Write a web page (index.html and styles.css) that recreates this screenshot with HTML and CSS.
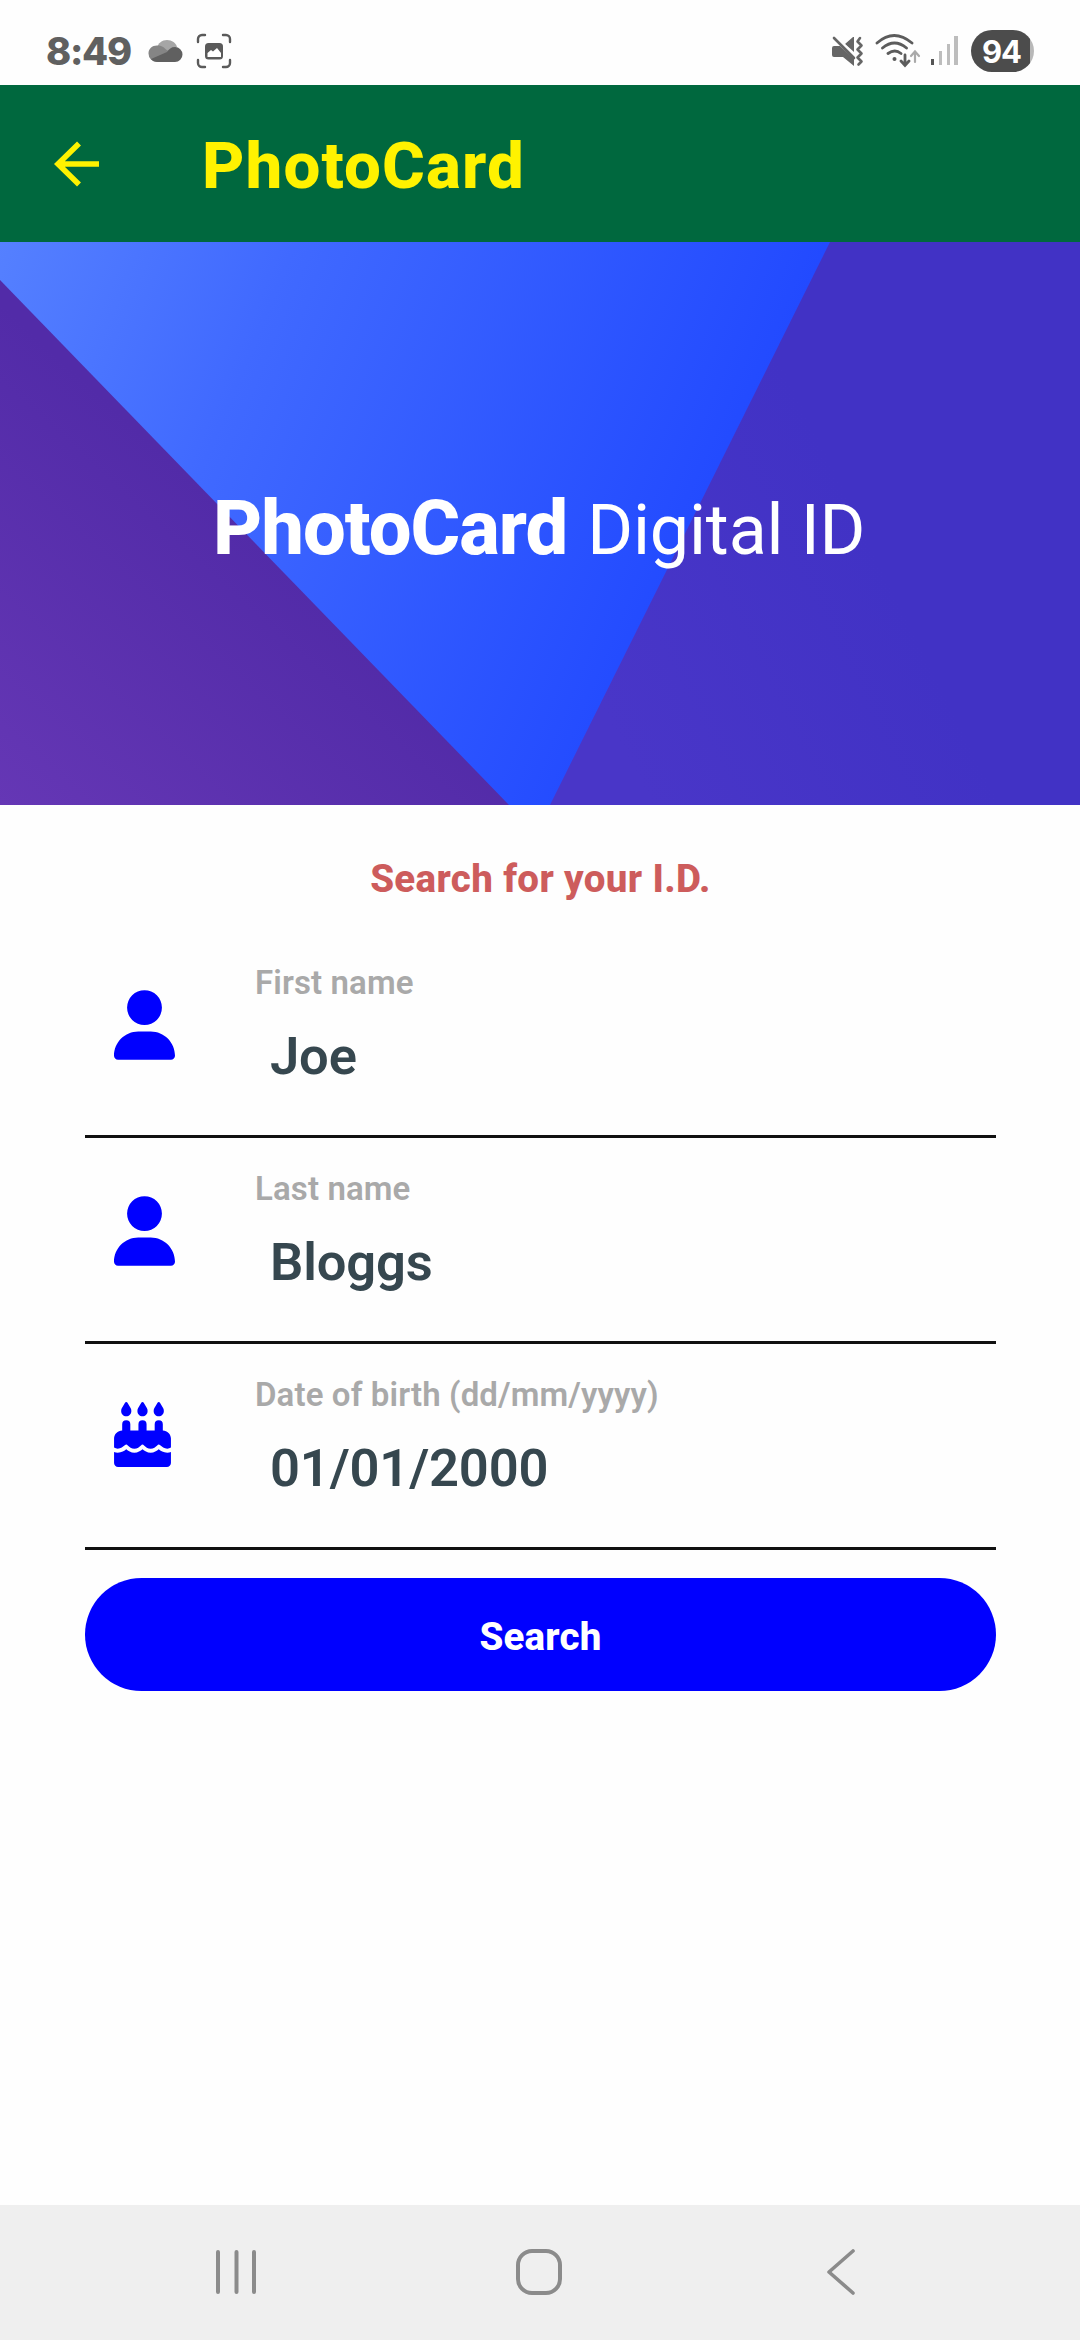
FILE: index.html
```html
<!DOCTYPE html>
<html lang="en">
<head>
<meta charset="utf-8">
<title>PhotoCard</title>
<link rel="stylesheet" href="styles.css">
</head>
<body>
<div class="status">
  <span class="clock">8:49</span>
  <svg class="cloud" width="36" height="24" viewBox="0 0 36 24"><path fill="#a6a6a6" d="M9 9C10 4 14 1 19 1c5 0 9 3 10 7l-8 6z"/><path fill="#858585" d="M9 23a8.500 8.500 0 0 1-8.500-8.500C.5 10 4 6.500 9 6.500c5 0 7 2 9 4l8 5-6 7.500z"/><path fill="#606060" d="M10 23c-3 0-6-1-7-3l16-7c2-3 4-5 8-5a7.500 7.500 0 0 1 0 15z"/></svg>
  <svg class="capture" width="36" height="36" viewBox="0 0 36 36"><g fill="none" stroke="#5a5a5a" stroke-width="2.400" stroke-linecap="round"><path d="M2 9V6a4 4 0 0 1 4-4h3M27 2h3a4 4 0 0 1 4 4v3M34 27v3a4 4 0 0 1-4 4h-3M9 34H6a4 4 0 0 1-4-4v-3"/></g><rect x="9" y="10" width="18" height="16.500" rx="3.500" fill="#5a5a5a"/><path fill="#fff" d="M11.500 24v-4l3.500-3 2 1.500 4-3.500 4 5v4z"/></svg>
  <div class="status-right">
    <svg width="34" height="32" viewBox="0 0 34 32"><path fill="#666" d="M3 11h6l14 13v7L12 22H3a2 2 0 0 1-2-2v-7a2 2 0 0 1 2-2zM14 9l8-7h1v15z"/><path d="M5 2l20 20" stroke="#fefefe" stroke-width="2.500"/><path d="M3 3l20 20M29 3l-2.500 3.500 4 4-4 4 4 4-4 4 4 4-3 3" fill="none" stroke="#666" stroke-width="2.600" stroke-linecap="round" stroke-linejoin="round"/></svg>
    <svg class="wifi" width="46" height="36" viewBox="0 0 46 36"><g fill="none" stroke="#5c5c5c" stroke-width="2.800" stroke-linecap="round"><path d="M2 10q17-15 35 0M7.500 15q12-10 24 0M13 20.500q7-5 13 0M30 22v10m-4-4 4 4.500 4-4.500"/><path d="M40 29V19m-4 4 4-4.500 4 4.500" stroke="#aaa" stroke-width="2.200"/></g><circle cx="19.500" cy="26" r="2" fill="#5c5c5c"/></svg>
    <svg class="signal" width="27" height="29" viewBox="0 0 27 29"><path fill="#555" d="M0 23h3v6H0z"/><path fill="#bdbdbd" d="M8 15h3v14H8zM16 8h3v21h-3zM23 0h4v29h-4z"/></svg>
    <span class="battery">94</span>
  </div>
</div>
<header class="appbar">
  <svg width="46" height="48" viewBox="0 0 46 48"><path d="M45 24H4M25 3.500 4 24l21 20.500" fill="none" stroke="#fff200" stroke-width="5.600"/></svg>
  <h1 class="title">PhotoCard</h1>
</header>
<section class="hero">
  <svg class="hero-art" width="1080" height="563" viewBox="0 0 1080 563" preserveAspectRatio="none">
    <defs>
      <linearGradient id="blue" gradientUnits="userSpaceOnUse" x1="0" y1="0" x2="720" y2="300"><stop offset="0" stop-color="#5580ff"/><stop offset=".35" stop-color="#4069ff"/><stop offset="1" stop-color="#2149ff"/></linearGradient>
      <linearGradient id="purple" gradientUnits="userSpaceOnUse" x1="250" y1="290" x2="0" y2="563"><stop offset="0" stop-color="#522ba8"/><stop offset="1" stop-color="#6537b5"/></linearGradient>
      <linearGradient id="indigo" gradientUnits="userSpaceOnUse" x1="620" y1="500" x2="900" y2="360"><stop offset="0" stop-color="#4936c8"/><stop offset="1" stop-color="#4132c5"/></linearGradient>
    </defs>
    <path fill="url(#blue)" d="M0 0h1080v563H0z"/>
    <path fill="url(#purple)" d="M0 38 509 563H0z"/>
    <path fill="url(#indigo)" d="M830 0h250v563H550z"/>
  </svg>
  <div class="hero-text"><b class="brand">PhotoCard</b><span class="product">Digital ID</span></div>
</section>
<main class="form">
  <p class="prompt">Search for your I.D.</p>
  <div class="field">
    <svg class="user" width="61" height="70" viewBox="0 0 448 512"><path d="M224 256A128 128 0 1 0 224 0a128 128 0 1 0 0 256zm-45.700 48C79.800 304 0 383.800 0 482.300C0 498.700 13.300 512 29.700 512H418.300c16.400 0 29.700-13.300 29.700-29.700C448 383.800 368.200 304 269.700 304H178.300z"/></svg>
    <div class="entry"><span class="label">First name</span><span class="value">Joe</span></div>
  </div>
  <div class="field">
    <svg class="user" width="61" height="70" viewBox="0 0 448 512"><path d="M224 256A128 128 0 1 0 224 0a128 128 0 1 0 0 256zm-45.700 48C79.800 304 0 383.800 0 482.300C0 498.700 13.300 512 29.700 512H418.300c16.400 0 29.700-13.300 29.700-29.700C448 383.800 368.200 304 269.700 304H178.300z"/></svg>
    <div class="entry"><span class="label">Last name</span><span class="value">Bloggs</span></div>
  </div>
  <div class="field">
    <svg class="cake" width="57" height="65" viewBox="0 0 448 512"><path id="flame" d="M86.400 5.500 61.800 47.600C58 54.100 56 61.600 56 69.200V72c0 22.100 17.900 40 40 40s40-17.900 40-40v-2.800c0-7.600-2-15-5.800-21.600L105.600 5.500C103.600 2.100 100 0 96 0s-7.600 2.100-9.600 5.500z"/><use href="#flame" x="128"/><use href="#flame" x="256"/><path d="M128 176a32 32 0 0 0-64 0v48c-35.300 0-64 28.700-64 64v71c8.300 5.200 18.100 9 28.800 9 24 0 43-17 55.700-27a16 16 0 0 1 23.500 1c11 11 30 26 52 26s41-15 52-26a16 16 0 0 1 24 0c11 11 30 26 52 26s41-15 52-26a16 16 0 0 1 23.500-1c12.700 10 31.700 27 55.700 27 10.700 0 20.500-3.800 28.800-9v-71c0-35.300-28.700-64-64-64v-48a32 32 0 0 0-64 0v48h-64v-48a32 32 0 0 0-64 0v48h-64zM448 394.600c-8.500 3.300-18.200 5.400-28.800 5.400-31 0-53-15-67.200-27-15 13-37 27-64 27s-49-14-64-27c-15 13-37 27-64 27s-49-14-64-27c-14.200 12-36.200 27-67.200 27-10.600 0-20.300-2.100-28.800-5.400V480c0 17.700 14.300 32 32 32h384c17.700 0 32-14.300 32-32z"/></svg>
    <div class="entry"><span class="label">Date of birth (dd/mm/yyyy)</span><span class="value">01/01/2000</span></div>
  </div>
  <button class="search">Search</button>
</main>
<nav class="navbar">
  <svg width="42" height="44" viewBox="0 0 42 44"><path d="M2 2v40M20.500 2v40M38 2v40" stroke="#8b8b8b" stroke-width="4" stroke-linecap="round"/></svg>
  <svg class="home" width="46" height="46" viewBox="0 0 46 46"><rect x="2" y="2" width="42" height="42" rx="14" fill="none" stroke="#8b8b8b" stroke-width="4"/></svg>
  <svg width="30" height="46" viewBox="0 0 30 46"><path d="M27 2 3 23l24 21" fill="none" stroke="#8b8b8b" stroke-width="3.600" stroke-linecap="round" stroke-linejoin="round"/></svg>
</nav>
</body>
</html>
```
FILE: styles.css
```css
* { box-sizing: border-box; }
body {
  margin: 0;
  width: 1080px;
  height: 2340px;
  display: flex;
  flex-direction: column;
  background: #fefefe;
  font-family: Roboto, sans-serif;
  overflow: hidden;
}
svg { display: block; flex: none; }
.status {
  height: 85px;
  padding: 16px 0 0 46px;
  display: flex;
  align-items: center;
  flex: none;
}
.clock {
  width: 102px;
  font: 800 38px/40px Inter, sans-serif;
  letter-spacing: -1.300px;
  color: #606060;
}
.capture { margin-left: 12px; }
.status-right {
  margin-left: auto;
  padding-right: 46px;
  display: flex;
  align-items: center;
}
.wifi { margin-left: 10px; }
.signal { margin-left: 10px; }
.battery {
  width: 63px;
  height: 42px;
  margin-left: 13px;
  padding-right: 2px;
  border-radius: 21px;
  background: linear-gradient(to right, #4c4c4c 59px, #b8b8b8 59px);
  color: #fff;
  font: 700 31px/43px Inter, sans-serif;
  letter-spacing: -1px;
  text-align: center;
}
.appbar {
  height: 157px;
  padding-left: 54px;
  display: flex;
  align-items: center;
  gap: 102px;
  background: #00683e;
  flex: none;
}
.title {
  margin: 4px 0 0;
  font-size: 65.500px;
  line-height: 76px;
  font-weight: 800;
  letter-spacing: 1.100px;
  color: #fff200;
}
.hero {
  height: 563px;
  display: grid;
  flex: none;
}
.hero-art, .hero-text { grid-area: 1 / 1; }
.hero-text {
  padding: 236px 0 0 213px;
  display: flex;
  align-items: baseline;
  gap: 20px;
  color: #fff;
  line-height: 100px;
  white-space: nowrap;
}
.brand { font-size: 76px; font-weight: 800; letter-spacing: -1px; }
.product { font-size: 70px; letter-spacing: -0.150px; }
.form {
  flex: 1;
  padding: 0 84px 0 85px;
  display: flex;
  flex-direction: column;
}
.prompt {
  margin: 51px 0 0;
  font-size: 38.500px;
  line-height: 46px;
  font-weight: 800;
  letter-spacing: 0.350px;
  text-align: center;
  color: #cd5c5c;
}
.field {
  height: 206px;
  padding-left: 29px;
  display: flex;
  border-bottom: 3px solid #111;
}
.prompt + .field { margin-top: 30px; }
.user, .cake { margin-top: 58px; fill: #0000ff; }
.entry {
  padding-top: 31px;
  display: flex;
  flex-direction: column;
}
.user + .entry { margin-left: 80px; }
.cake + .entry { margin-left: 84px; }
.label {
  font-size: 33px;
  line-height: 40px;
  font-weight: 600;
  letter-spacing: 0.120px;
  color: #a9a9a9;
}
.value {
  padding: 22px 0 0 15px;
  font-size: 52.500px;
  line-height: 62px;
  font-weight: 650;
  letter-spacing: -0.150px;
  color: #36474f;
}
.search {
  height: 113px;
  margin-top: 28px;
  padding: 4px 0 0;
  border: 0;
  border-radius: 57px;
  background: #0000ff;
  color: #fff;
  font: 800 38.500px/46px Roboto, sans-serif;
  letter-spacing: 0.200px;
}
.navbar {
  height: 135px;
  padding: 0 224px 2px 216px;
  display: flex;
  align-items: center;
  justify-content: space-between;
  background: #efefef;
  flex: none;
}
.home { margin-right: 7px; }
```
